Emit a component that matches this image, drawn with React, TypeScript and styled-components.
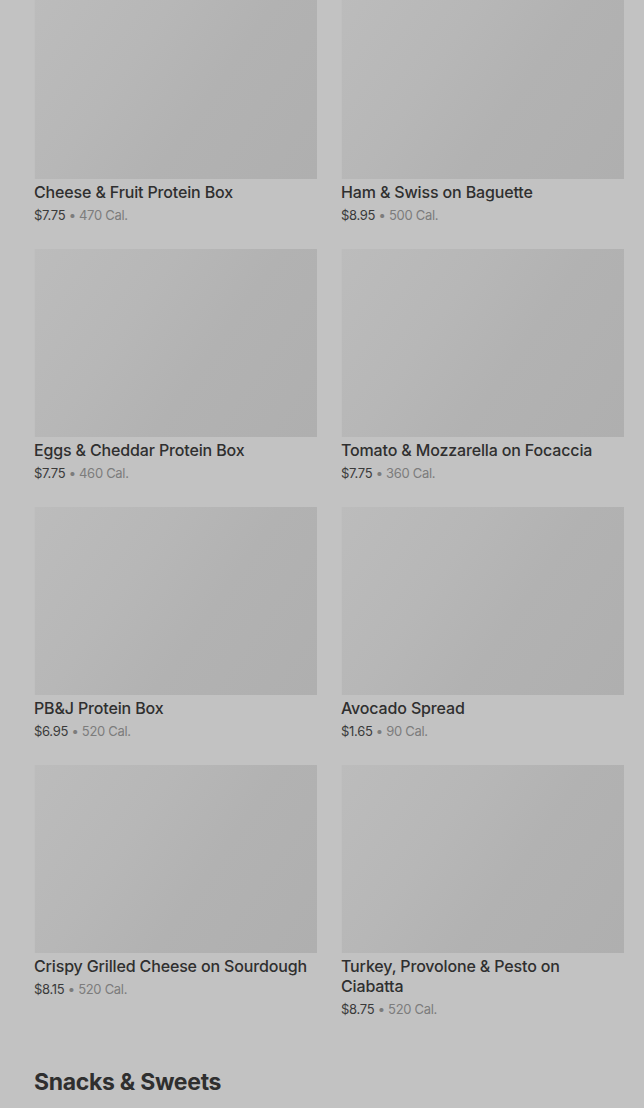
import React from "react";
import styled, { createGlobalStyle } from "styled-components";

const Global = createGlobalStyle`
  html, body { margin: 0; padding: 0; background: #c2c2c2; }
  body { font-family: Inter, "Noto Sans", Roboto, sans-serif; overflow: hidden; }
`;

const Page = styled.div`
  height: 1108px;
  overflow: hidden;
  padding: 0 20px 0 34px;
  box-sizing: border-box;
`;

const Grid = styled.div`
  display: grid;
  grid-template-columns: 283px 283px;
  column-gap: 24px;
  row-gap: 24px;
  margin-top: -9px;
`;

const Card = styled.div`
  display: flex;
  flex-direction: column;
`;

const Thumb = styled.div`
  height: 188px;
  background: linear-gradient(125deg, #bcbcbc 0%, #b7b7b7 35%, #b2b2b2 60%, #afafaf 100%);
  box-shadow: inset 1px 0 0 #c0c0c0;
`;

const Title = styled.div`
  margin-top: 3px;
  font-size: 16px;
  line-height: 20px;
  font-weight: 500;
  color: #2f2f2f;
  letter-spacing: -0.15px;
`;

const Meta = styled.div`
  margin-top: 3px;
  font-size: 13px;
  line-height: 20px;
  color: #7c7c7c;
  letter-spacing: -0.3px;
`;

const Price = styled.span`
  color: #3a3a3a;
`;

const Heading = styled.h2`
  margin: 47px 0 0;
  font-size: 23px;
  line-height: 32px;
  font-weight: 700;
  color: #2f2f2f;
  letter-spacing: -0.3px;
`;

const items = [
  { name: "Cheese & Fruit Protein Box", price: "$7.75", cal: "470 Cal." },
  { name: "Ham & Swiss on Baguette", price: "$8.95", cal: "500 Cal." },
  { name: "Eggs & Cheddar Protein Box", price: "$7.75", cal: "460 Cal." },
  { name: "Tomato & Mozzarella on Focaccia", price: "$7.75", cal: "360 Cal." },
  { name: "PB&J Protein Box", price: "$6.95", cal: "520 Cal." },
  { name: "Avocado Spread", price: "$1.65", cal: "90 Cal." },
  { name: "Crispy Grilled Cheese on Sourdough", price: "$8.15", cal: "520 Cal." },
  { name: "Turkey, Provolone & Pesto on Ciabatta", price: "$8.75", cal: "520 Cal." },
];

export default function App() {
  return (
    <>
      <Global />
      <Page>
        <Grid>
          {items.map((it) => (
            <Card key={it.name}>
              <Thumb />
              <Title>{it.name}</Title>
              <Meta>
                <Price>{it.price}</Price> • {it.cal}
              </Meta>
            </Card>
          ))}
        </Grid>
        <Heading>Snacks &amp; Sweets</Heading>
      </Page>
    </>
  );
}
